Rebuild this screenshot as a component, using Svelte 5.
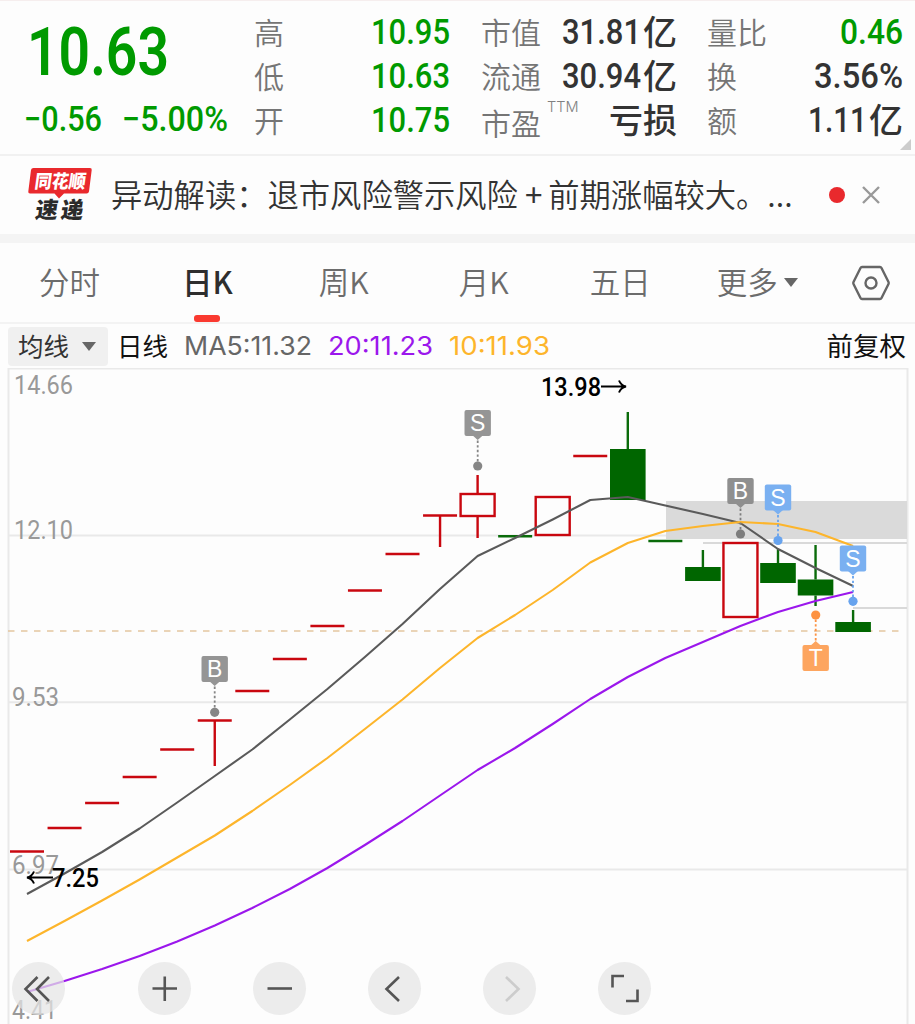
<script lang="ts">
  type Stat = { label: string; sup?: string; num?: string; width?: number; unit?: string; green?: boolean };
  type Candle = { y: number; h?: number; top?: number; bottom?: number; up: boolean };
  type Marker = { x: number; y: number; dot: number; letter: string; color: string; dotColor: string };

  const stats: Stat[][] = [
    [
      { label: '高', num: '10.95', width: 79, green: true },
      { label: '低', num: '10.63', width: 79, green: true },
      { label: '开', num: '10.75', width: 79, green: true },
    ],
    [
      { label: '市值', num: '31.81', width: 79, unit: '亿' },
      { label: '流通', num: '30.94', width: 79, unit: '亿' },
      { label: '市盈', sup: 'TTM', unit: '亏损' },
    ],
    [
      { label: '量比', num: '0.46', width: 63, green: true },
      { label: '换', num: '3.56%', width: 89 },
      { label: '额', num: '1.11', width: 59, unit: '亿' },
    ],
  ];

  const tabs = ['分时', '日K', '周K', '月K', '五日'];
  let activeTab = '日K';

  const STEP = 37.55;
  const cx = (i: number) => 27 + i * STEP;

  // y/h is the body, top/bottom are the wick ends
  const candles: Candle[] = [
    { y: 851.5, up: true },
    { y: 828, up: true },
    { y: 803, up: true },
    { y: 777, up: true },
    { y: 749.5, up: true },
    { y: 720.5, bottom: 766, up: true },
    { y: 691, up: true },
    { y: 659, up: true },
    { y: 626, up: true },
    { y: 590.5, up: true },
    { y: 554, up: true },
    { y: 515.5, bottom: 547, up: true },
    { y: 494, h: 22, top: 475, bottom: 538, up: true },
    { y: 536.3, up: false },
    { y: 497, h: 38, up: true },
    { y: 456, up: true },
    { y: 449, h: 51, top: 412, up: false },
    { y: 541, up: false },
    { y: 567, h: 14, top: 550, up: false },
    { y: 543, h: 74, up: true },
    { y: 563, h: 20, top: 549, up: false },
    { y: 579.5, h: 16, top: 545, bottom: 606, up: false },
    { y: 622, h: 10, top: 610, up: false },
  ];

  const averages = [
    { color: '#5a5a5a', ys: [894, 873.5, 852, 828.5, 802.5, 776, 749.5, 719.5, 689, 657, 624, 589, 556, 538, 519.5, 500, 497, 505.5, 514, 523, 549, 568, 586] },
    { color: '#fdb52b', ys: [941, 921, 900.5, 879.5, 857.5, 835.5, 811, 785, 758, 729, 699.5, 668, 638, 615, 590, 562.5, 543, 531, 526, 522, 524, 532, 546] },
    { color: '#9b17ec', ys: [992, 981, 969, 956, 941.5, 925.5, 908, 889, 868, 845, 821, 795.5, 770, 748, 724, 699, 677, 658, 642, 626, 612, 601, 592] },
  ];
  const points = (ys: number[]) => ys.map((y, i) => `${cx(i).toFixed(1)},${y}`).join(' ');

  const markers: Marker[] = [
    { x: 214.7, y: 669, dot: 712.3, letter: 'B', color: '#959595', dotColor: '#868686' },
    { x: 477.7, y: 423, dot: 466, letter: 'S', color: '#959595', dotColor: '#868686' },
    { x: 740.5, y: 491, dot: 534, letter: 'B', color: '#8f8f8f', dotColor: '#7d7d7d' },
    { x: 778, y: 497.5, dot: 540.5, letter: 'S', color: '#7ab0f1', dotColor: '#67a3ee' },
    { x: 853, y: 558.5, dot: 601.3, letter: 'S', color: '#7ab0f1', dotColor: '#67a3ee' },
    { x: 815.7, y: 658, dot: 615, letter: 'T', color: '#fda55f', dotColor: '#fd9242' },
  ];

  const scale = [
    { text: '14.66', x: 14, y: 394, w: 59 },
    { text: '12.10', x: 14, y: 538.5, w: 59 },
    { text: '9.53', x: 12, y: 706, w: 47 },
    { text: '6.97', x: 12, y: 874, w: 47 },
    { text: '4.41', x: 12, y: 1018.5, w: 45 },
  ];

  const controls = [
    { name: 'first', d: 'M25.5 15 13.5 27l12 12M37 15 25 27l12 12' },
    { name: 'zoom in', d: 'M14.5 26.5h24.5M26.75 14.5v24.5' },
    { name: 'zoom out', d: 'M14.5 26.5h24.5' },
    { name: 'previous', d: 'M31 15 18.5 27 31 39' },
    { name: 'next', d: 'M23 15 35.5 27 23 39', disabled: true },
    { name: 'fullscreen', d: 'M14.5 25.5V14H26M28 39h11.500V27.500' },
  ];
</script>

{#snippet num(text: string, width: number, size: number, height: number, base: number)}
  <svg class="num" {width} {height}>
    <text x="0" y={base} font-size={size} textLength={width} lengthAdjust="spacingAndGlyphs">{text}</text>
  </svg>
{/snippet}

<main>
  <section class="quote">
    <div class="price">
      <div class="last">{@render num('10.63', 142, 66, 66, 57)}</div>
      <div class="change">
        {@render num('−0.56', 78, 35, 44, 31.5)}
        {@render num('−5.00%', 106, 35, 44, 31.5)}
      </div>
    </div>
    {#each stats as column}
      <div class="column">
        {#each column as stat}
          <div class="stat">
            <span class="label" class:low={stat.sup}>{stat.label}</span>
            {#if stat.sup}<span class="sup">{stat.sup}</span>{/if}
            <span class="value" class:green={stat.green}>
              {#if stat.num && stat.width}{@render num(stat.num, stat.width, 35, 44, 33)}{/if}
              {#if stat.unit}<span class="unit">{stat.unit}</span>{/if}
            </span>
          </div>
        {/each}
      </div>
    {/each}
    <i class="corner"></i>
  </section>

  <section class="news">
    <svg class="logo" width="66" height="56" viewBox="0 0 66 56">
      <path d="M6.500 1H63q2 0 1.700 2L62 24.500q-.4 2-2.400 2H37L32 31.500l-4.500-5H3q-2 0-1.700-2L4 3q.4-2 2.500-2Z" fill="#e9292d" />
      <text x="0" y="0" transform="translate(7 21) skewX(-8)" font-size="18.500" textLength="51" lengthAdjust="spacingAndGlyphs" fill="#fff">同花顺</text>
      <text x="0" y="0" transform="translate(7.500 51) skewX(-8)" font-size="22.500" textLength="48" fill="#2b2b2b">速递</text>
    </svg>
    <span class="headline">异动解读：退市风险警示风险<b>+</b>前期涨幅较大。<em>...</em></span>
    <i class="dot"></i>
    <svg class="close" width="20" height="20" viewBox="0 0 20 20"><path d="M2 2l16 16M18 2 2 18" /></svg>
  </section>

  <nav>
    {#each tabs as tab}
      <button class="tab" class:active={tab === activeTab} on:click={() => (activeTab = tab)}>{tab}</button>
    {/each}
    <button class="tab more">更多<i class="caret"></i></button>
    <svg class="settings" width="40" height="36" viewBox="0 0 40 36">
      <path d="M11 2h18q1 0 1.500 1l7 14q.5 1 0 2l-7 14q-.5 1-1.500 1H11q-1 0-1.500-1l-7-14q-.5-1 0-2l7-14q.5-1 1.500-1Z" />
      <circle cx="20" cy="18" r="5.500" />
    </svg>
  </nav>

  <div class="legend">
    <span class="picker"><span class="lift">均线</span><i class="caret"></i></span>
    <span class="period lift">日线</span>
    <span class="ma" style:color="#666">{@render num('MA5:11.32', 128, 26, 44, 31)}</span>
    <span class="ma" style:color="#9b17ec">{@render num('20:11.23', 105, 26, 44, 31)}</span>
    <span class="ma" style:color="#fdb52b">{@render num('10:11.93', 101, 26, 44, 31)}</span>
    <span class="adjust lift">前复权</span>
  </div>

  <div class="chart">
    <svg width="915" height="656" viewBox="0 368 915 656">
      <path class="grid" d="M8.500 1024V368.500H907.500V1024M8 535.500H907M8 702.300H907M8 869.500H907" />
      <rect x="666" y="501" width="241" height="38" fill="#dadada" />
      <path d="M703 543H907M853 608H907" stroke="#d9d9d9" stroke-width="2" />
      <path d="M8 631H904" stroke="#e3c6a0" stroke-width="1.500" stroke-dasharray="6.500 6.500" />

      {#each scale as tick}
        <text class="tick" x={tick.x} y={tick.y} textLength={tick.w} lengthAdjust="spacingAndGlyphs">{tick.text}</text>
      {/each}

      {#each candles as c, i}
        <g class={c.up ? 'up' : 'down'}>
          {#if c.h}
            {#if c.top}<path d="M{cx(i)} {c.top}V{c.y}" />{/if}
            {#if c.bottom}<path d="M{cx(i)} {c.y + c.h}V{c.bottom}" />{/if}
            {#if c.up}
              <rect x={cx(i) - 17} y={c.y} width="34" height={c.h} />
            {:else}
              <rect x={cx(i) - 17.8} y={c.y} width="35.600" height={c.h} />
            {/if}
          {:else}
            <path d="M{cx(i) - 17} {c.y}h34" />
            {#if c.bottom}<path d="M{cx(i)} {c.y}V{c.bottom}" />{/if}
          {/if}
        </g>
      {/each}

      {#each averages as line}
        <polyline points={points(line.ys)} stroke={line.color} />
      {/each}

      {#each markers as m}
        {@const dir = m.dot > m.y ? 1 : -1}
        <path d="M{m.x} {m.y + 13 * dir}V{m.dot}" stroke={m.dotColor} stroke-width="1.800" stroke-dasharray="2.400 2.200" />
        <circle cx={m.x} cy={m.dot} r="4.600" fill={m.dotColor} />
        <path d="M{m.x - 5} {m.y + 12.5 * dir}h10l-5 {4.5 * dir}z" fill={m.color} />
        <rect x={m.x - 13.2} y={m.y - 13} width="26.400" height="26" rx="2" fill={m.color} />
        <text class="letter" x={m.x} y={m.y + 8}>{m.letter}</text>
      {/each}

      <text class="extreme" x="541" y="396" textLength="60" lengthAdjust="spacingAndGlyphs">13.98</text>
      <path class="arrow" d="M601 386.500H625M619 380.500q2 5 7 6q-5 1-7 6" />
      <text class="extreme" x="52" y="886.500" textLength="47" lengthAdjust="spacingAndGlyphs">7.25</text>
      <path class="arrow" d="M53 877.500H28M34 871.500q-2 5-7 6q5 1 7 6" />
    </svg>

    <div class="controls">
      {#each controls as control}
        <button class="control" class:disabled={control.disabled} aria-label={control.name}>
          <svg width="53" height="53" viewBox="0 0 53 53"><path d={control.d} /></svg>
        </button>
      {/each}
    </div>
  </div>
</main>

<style>
  :global(body) {
    background: #fdfdfd;
    overflow: hidden;
  }

  main {
    width: 915px;
    height: 1024px;
    overflow: hidden;
    background: #fdfdfd;
    color: #333;
    font-family: 'Noto Sans CJK SC', sans-serif;
  }

  svg {
    display: block;
    fill: none;
  }

  button {
    padding: 0;
    border: 0;
    background: none;
    color: inherit;
    font: inherit;
  }

  .num {
    flex: none;
    overflow: visible;
  }

  .num text {
    fill: currentColor;
    font-family: Roboto, sans-serif;
    font-weight: 500;
  }

  .quote {
    position: relative;
    display: flex;
    box-sizing: border-box;
    height: 156px;
    padding-top: 10px;
    border-top: 1px solid #f6eeee;
    border-bottom: 2px solid #f1f1f1;
  }

  .price {
    flex: none;
    width: 230px;
    padding-left: 24px;
    color: #009a00;
  }

  .last {
    height: 88px;
    padding: 7px 0 0 3px;
    box-sizing: border-box;
  }

  .last :global(text) {
    font-weight: 600;
  }

  .change {
    display: flex;
    gap: 20px;
  }

  .column {
    flex: none;
    width: 196px;
    margin-right: 31px;
  }

  .column + .column {
    margin-right: 30px;
  }

  .stat {
    display: flex;
    align-items: center;
    height: 44px;
  }

  .label {
    padding-bottom: 4px;
    color: #757575;
    font-size: 30px;
    font-weight: 350;
    line-height: 40px;
  }

  .label.low {
    padding: 2px 0 0;
  }

  .sup {
    align-self: flex-start;
    margin-left: 6px;
    color: #808080;
    font: 300 14.5px/16px Inter, sans-serif;
    white-space: nowrap;
  }

  .value {
    display: flex;
    align-items: center;
    margin-left: auto;
  }

  .value.green {
    color: #009a00;
  }

  .unit {
    margin: 0 0 4px 2px;
    font-size: 34px;
    font-weight: 500;
    line-height: 40px;
  }

  .corner {
    position: absolute;
    right: 4px;
    bottom: 4px;
    border-left: 11px solid transparent;
    border-bottom: 11px solid #ccc;
  }

  .news {
    display: flex;
    align-items: center;
    box-sizing: border-box;
    height: 87px;
    padding: 0 34px 0 27px;
    border-bottom: 9px solid #f4f4f4;
  }

  .logo text {
    font-weight: 900;
  }

  .headline {
    margin-left: 18px;
    padding-bottom: 4px;
    font-size: 31.3px;
    font-weight: 350;
    white-space: nowrap;
  }

  .headline b {
    margin: 0 6px 0 7px;
    font-weight: 400;
  }

  .headline em {
    font-style: normal;
  }

  .dot {
    width: 16px;
    height: 16px;
    margin-left: auto;
    border-radius: 50%;
    background: #e9292d;
  }

  .close {
    margin-left: 16px;
    stroke: #999;
    stroke-width: 2.4;
  }

  nav {
    display: flex;
    align-items: center;
    box-sizing: border-box;
    height: 81px;
    padding-left: 39px;
    border-bottom: 2px solid #f3f3f3;
  }

  .tab {
    position: relative;
    height: 79px;
    margin-right: 84px;
    padding-bottom: 4px;
    color: #6c6c6c;
    font-size: 30.5px;
    font-weight: 350;
    white-space: nowrap;
  }

  .tab:first-child {
    margin-right: 82px;
  }

  .tab:nth-child(2) {
    margin-right: 86px;
  }

  .tab:nth-child(3) {
    margin-right: 90px;
  }

  .tab:nth-child(4) {
    margin-right: 81px;
  }

  .tab:nth-child(5) {
    margin-right: 66px;
  }

  .tab.active {
    color: #2e2e2e;
    font-weight: 500;
  }

  .tab.active::after {
    content: '';
    position: absolute;
    left: 12px;
    bottom: 0;
    width: 26px;
    height: 7px;
    border-radius: 3px;
    background: #fa3a30;
  }

  .tab.more {
    display: flex;
    align-items: center;
    margin-right: 53px;
  }

  .caret {
    border: 7px solid transparent;
    border-top: 9px solid #666;
    border-bottom: 0;
  }

  .more .caret {
    margin: 3px 0 0 6px;
  }

  .settings {
    stroke: #666;
    stroke-width: 2.4;
  }

  .legend {
    display: flex;
    align-items: center;
    height: 44px;
    padding: 0 9px 0 8px;
    font-size: 25.5px;
  }

  .lift {
    padding-bottom: 4px;
  }

  .picker {
    display: flex;
    align-items: center;
    justify-content: space-between;
    box-sizing: border-box;
    width: 100px;
    height: 39px;
    padding: 0 12px 0 10px;
    border-radius: 4px;
    background: #f0f0f0;
  }

  .period {
    margin: 0 16px 0 9px;
    color: #111;
  }

  .ma {
    margin-right: 16px;
  }

  .ma :global(text) {
    font-family: Inter, sans-serif;
    font-weight: 400;
  }

  .adjust {
    margin-left: auto;
    color: #111;
    font-size: 26.5px;
  }

  .chart {
    position: relative;
    height: 656px;
  }

  .grid {
    stroke: #e9e9e9;
    stroke-width: 2;
  }

  .tick {
    fill: #999;
    font: 400 26px Roboto, sans-serif;
  }

  .up,
  .down {
    stroke-width: 2.4;
  }

  .up {
    stroke: #c9070f;
  }

  .up rect {
    fill: #fdfdfd;
  }

  .down {
    stroke: #0a6b0a;
  }

  .down rect {
    fill: #006600;
    stroke: none;
  }

  polyline {
    stroke-width: 2.1;
    stroke-linejoin: round;
  }

  .letter {
    fill: #fff;
    font: 400 23px 'Liberation Sans', sans-serif;
    text-anchor: middle;
  }

  .extreme {
    fill: #000;
    font: 500 26px Roboto, sans-serif;
  }

  .arrow {
    stroke: #000;
    stroke-width: 2;
  }

  .controls {
    position: absolute;
    left: 11.5px;
    top: 593.5px;
    display: flex;
    gap: 62px;
  }

  .control {
    width: 53px;
    height: 53px;
    border-radius: 50%;
    background: rgba(228, 228, 228, 0.72);
    stroke: #555;
    stroke-width: 2.6;
  }

  .control:first-child {
    margin-right: 11px;
  }

  .control.disabled {
    stroke: #ccc;
  }
</style>
